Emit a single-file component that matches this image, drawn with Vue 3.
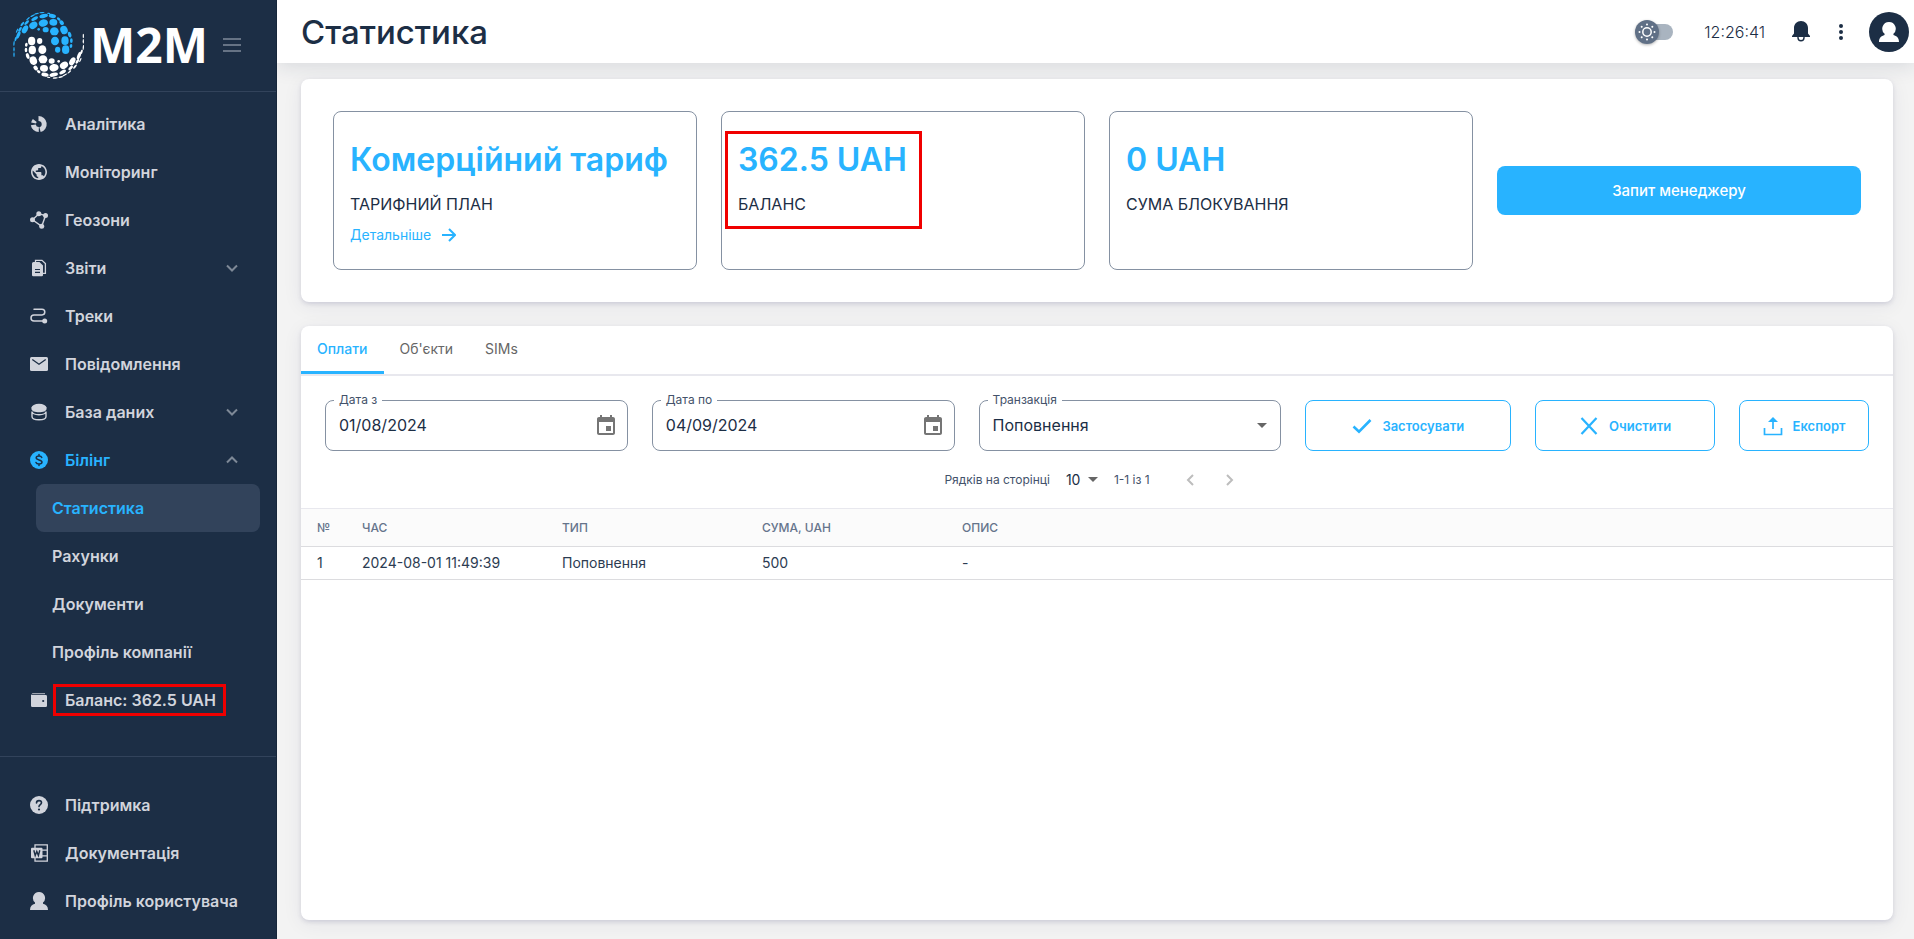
<script setup>
import { ref } from 'vue'

const dots = [
  [42, 164, 2, 7, 0], [42, 148, 2, 7, 0], [42, 130, 2, 8, 5], [47, 117, 3, 7, 15], [55, 105, 5, 12, 22],
  [51, 92, 2, 7, 25], [60, 88, 4, 8, 32], [75, 88, 8, 13, 30], [67, 72, 3, 8, 40], [80, 68, 4, 9, 45],
  [100, 76, 13, 10, -35], [130, 69, 14, 11, -12], [160, 67, 12, 10, 5], [185, 68, 8, 6, 50],
  [84, 56, 2, 7, 50], [104, 56, 11, 5, -30], [131, 48, 13, 6, -12], [157, 48, 11, 6, 12], [176, 57, 6, 4, 35],
  [98, 47, 8, 2, -28], [110, 41, 7, 2, -15], [126, 38, 8, 2, -3], [146, 40, 5, 2, 5],
  [116, 88, 4, 4, 0], [137, 89, 9, 8, 0], [163, 94, 13, 12, 0], [192, 90, 11, 13, -20], [209, 104, 5, 9, -20],
  [165, 123, 12, 13, 0], [195, 122, 11, 13, 0], [214, 122, 4, 7, 0], [173, 149, 8, 9, 0], [197, 149, 11, 13, 0],
  [213, 138, 4, 6, 10],
]

const nav = [
  { icon: 'pie', label: 'Аналітика' },
  { icon: 'globe', label: 'Моніторинг' },
  { icon: 'geo', label: 'Геозони' },
  { icon: 'docs', label: 'Звіти', fold: true },
  { icon: 'track', label: 'Треки' },
  { icon: 'mail', label: 'Повідомлення' },
  { icon: 'db', label: 'База даних', fold: true },
  {
    icon: 'billing', label: 'Білінг', fold: true, open: true,
    items: ['Статистика', 'Рахунки', 'Документи', 'Профіль компанії'],
  },
  { icon: 'wallet', label: 'Баланс: 362.5 UAH', marked: true },
]
const support = [
  { icon: 'help', label: 'Підтримка' },
  { icon: 'word', label: 'Документація' },
  { icon: 'user', label: 'Профіль користувача' },
]
const icons = {
  pie: '<g fill="none" stroke="currentColor" stroke-width="5"><path d="M8.500 3.400A5.700 5.700 0 0 1 10 14.600"/><path d="M8.800 14.600A5.700 5.700 0 0 1 3.300 9.800"/><path d="M3.600 8A5.700 5.700 0 0 1 4.800 5.500"/></g>',
  globe: '<path fill="currentColor" transform="translate(-.6 -.6) scale(.8)" d="M12 2C6.480 2 2 6.480 2 12s4.480 10 10 10 10-4.480 10-10S17.520 2 12 2zm-1 17.930c-3.950-.490-7-3.850-7-7.930 0-.620.080-1.210.210-1.790L9 15v1c0 1.100.9 2 2 2v1.930zm6.900-2.540c-.260-.810-1-1.390-1.900-1.390h-1v-3c0-.550-.450-1-1-1H8v-2h2c.550 0 1-.450 1-1V7h2c1.100 0 2-.9 2-2v-.410c2.930 1.190 5 4.060 5 7.410 0 2.080-.8 3.970-2.100 5.390z"/>',
  geo: '<path fill="none" stroke="currentColor" stroke-width="1.400" d="M2.500 8.700 9 2.800 15.500 4.600 11.700 15.400z"/><g fill="currentColor"><circle cx="2.500" cy="8.700" r="2.500"/><circle cx="8.800" cy="2.700" r="2.500"/><circle cx="15.500" cy="4.600" r="2.500"/><circle cx="11.700" cy="15.300" r="2.500"/></g>',
  docs: '<path fill="none" stroke="currentColor" stroke-width="1.300" d="M5.500 3V1.300H12L15.400 4.500V14.300H13"/><path fill="currentColor" d="M3.500 3h6L13 6.500V16a1.200 1.200 0 0 1-1.200 1.200H3.200A1.200 1.200 0 0 1 2 16V4.500A1.500 1.500 0 0 1 3.500 3z"/><path stroke="#1c2e45" stroke-width="1.200" d="M5 10.500h5M5 13.300h5"/>',
  track: '<path fill="none" stroke="currentColor" stroke-width="1.500" stroke-linecap="round" d="M4 2.300h8a2.800 2.800 0 0 1 0 5.600H4a3 3 0 0 0 0 6h9"/><circle cx="14.700" cy="14" r="2.500" fill="currentColor"/>',
  mail: '<rect y="2" width="18" height="14" rx="1.500" fill="currentColor"/><path fill="none" stroke="#1c2e45" stroke-width="1.300" d="M2.300 4.500 9 9.200l6.700-4.700"/>',
  db: '<g fill="currentColor"><ellipse cx="9" cy="4.500" rx="7.500" ry="3.700"/><path d="M1.500 4.500h15V6c0 2-3.400 3.300-7.500 3.300S1.500 8 1.500 6z"/></g><path fill="none" stroke="currentColor" stroke-width="1.400" d="M2 8.500c.3 1.900 3.300 3.200 7 3.200s6.700-1.300 7-3.200M2 8.500v5c0 1.900 3.100 3.300 7 3.300s7-1.400 7-3.300v-5"/>',
  billing: '<circle cx="9" cy="9" r="9" fill="currentColor"/><path fill="none" stroke="#1c2e45" stroke-width="1.500" stroke-linecap="round" d="M11.800 6.400C11.400 5.300 10.300 4.900 9 4.900c-1.700 0-2.800.7-2.800 1.900C6.200 9.600 12 8.200 12 11.100c0 1.200-1.200 2-3 2-1.500 0-2.600-.5-3-1.600M9 3.500v1.400M9 13.100v1.400"/>',
  wallet: '<path fill="currentColor" opacity=".7" d="M2.500 2H15v1.200H1.500z"/><path fill="currentColor" d="M1 3.500l1 .6h13.700A1.300 1.300 0 0 1 17 5.400v9.300a1.300 1.300 0 0 1-1.300 1.300H2.300A1.300 1.300 0 0 1 1 14.700z"/><circle cx="13.200" cy="10" r="1.100" fill="#1c2e45"/>',
  help: '<circle cx="9" cy="9" r="9" fill="currentColor"/><path fill="none" stroke="#1c2e45" stroke-width="1.600" stroke-linecap="round" d="M6.500 7c0-1.500 1.100-2.400 2.500-2.400s2.500.9 2.500 2.200C11.500 8.600 9 8.700 9 10.600"/><circle cx="9" cy="13.500" r="1.100" fill="#1c2e45"/>',
  word: '<path fill="none" stroke="currentColor" stroke-width="1.300" d="M5 4V.8h12.300v16.400H5V14M12 6.200h5M12 11.800h5"/><rect x="1" y="3.700" width="11.500" height="10.600" rx="1" fill="currentColor"/><path fill="none" stroke="#1c2e45" stroke-width="1.400" d="M3.800 6.300 5.200 11.500 6.800 7.500 8.400 11.500 9.800 6.300"/>',
  user: '<path fill="currentColor" d="M9 0a6 6 0 0 1 4 10.500v1.300c3 .8 5 2.700 5 6.200H0c0-3.500 2-5.400 5-6.200v-1.300A6 6 0 0 1 9 0z"/>',
}

const tabs = ['Оплати', "Об'єкти", 'SIMs']
const dateFrom = ref('01/08/2024')
const dateTo = ref('04/09/2024')
const kind = ref('Поповнення')
const perPage = ref('10')
const rows = [{ n: 1, time: '2024-08-01 11:49:39', type: 'Поповнення', sum: 500, note: '-' }]
</script>

<template>
  <div class="app">
    <aside class="side">
      <div class="brand">
        <svg class="globe" viewBox="36 30 222 210" aria-hidden="true">
          <g fill="#28b3ff">
            <ellipse v-for="(d, i) in dots" :key="i" :cx="d[0]" :cy="d[1]" :rx="d[2]" :ry="d[3]" :transform="`rotate(${d[4]} ${d[0]} ${d[1]})`" />
          </g>
          <g fill="#fff" transform="rotate(180 146 136)">
            <ellipse v-for="(d, i) in dots" :key="i" :cx="d[0]" :cy="d[1]" :rx="d[2]" :ry="d[3]" :transform="`rotate(${d[4]} ${d[0]} ${d[1]})`" />
          </g>
        </svg>
        <span class="name">M2M</span>
        <button class="burger" type="button" aria-label="Меню"><i></i><i></i><i></i></button>
      </div>
      <nav class="nav">
        <template v-for="n in nav" :key="n.label">
          <a href="#" class="item" :class="{ active: n.open }">
            <svg class="ico" viewBox="0 0 18 18" aria-hidden="true" v-html="icons[n.icon]"></svg>
            <span class="text" :class="{ marked: n.marked }">{{ n.label }}</span>
            <svg v-if="n.fold" class="fold" viewBox="0 0 12 8" aria-hidden="true">
              <path :d="n.open ? 'M1 6.500 6 1.500 11 6.500' : 'M1 1.500 6 6.500 11 1.500'" />
            </svg>
          </a>
          <a v-for="(s, i) in n.items || []" :key="s" href="#" class="sub" :class="{ current: i === 0 }">{{ s }}</a>
        </template>
      </nav>
      <nav class="nav support">
        <a v-for="n in support" :key="n.label" href="#" class="item">
          <svg class="ico" viewBox="0 0 18 18" aria-hidden="true" v-html="icons[n.icon]"></svg>
          <span class="text">{{ n.label }}</span>
        </a>
      </nav>
    </aside>

    <div class="page">
      <header class="top">
        <h1>Статистика</h1>
        <button class="theme" type="button" aria-label="Тема">
          <span class="thumb">
            <svg viewBox="0 0 24 24" aria-hidden="true">
              <circle cx="12" cy="12" r="4.200" fill="none" stroke="#fff" stroke-width="1.500" />
              <g fill="#fff">
                <circle v-for="a in 8" :key="a" cx="12" cy="4.500" r="1" :transform="`rotate(${a * 45} 12 12)`" />
              </g>
            </svg>
          </span>
        </button>
        <time class="clock">12:26:41</time>
        <button class="bell" type="button" aria-label="Сповіщення">
          <svg viewBox="0 0 18 21" aria-hidden="true">
            <path fill="#1c2e45" d="M9 0c4 0 7 3 7 7v5.500L18 15v1H0v-1l2-2.500V7c0-4 3-7 7-7z" />
            <path fill="none" stroke="#1c2e45" stroke-width="1.400" d="M6 16v.8a3 3 0 0 0 6 0V16" />
          </svg>
        </button>
        <button class="more" type="button" aria-label="Більше"><i></i><i></i><i></i></button>
        <button class="avatar" type="button" aria-label="Профіль">
          <svg viewBox="0 0 18 18" aria-hidden="true" v-html="icons.user"></svg>
        </button>
      </header>

      <main class="main">
        <section class="card summary">
          <div class="stat">
            <h2>Комерційний тариф</h2>
            <p>ТАРИФНИЙ ПЛАН</p>
            <a href="#">Детальніше
              <svg viewBox="0 0 14 14" aria-hidden="true"><path d="M0 7h13M7 1l6 6-6 6" /></svg>
            </a>
          </div>
          <div class="stat boxed">
            <h2>362.5 UAH</h2>
            <p>БАЛАНС</p>
          </div>
          <div class="stat">
            <h2>0 UAH</h2>
            <p>СУМА БЛОКУВАННЯ</p>
          </div>
          <button class="primary" type="button">Запит менеджеру</button>
        </section>

        <section class="card list">
          <div class="tabs" role="tablist">
            <button v-for="(t, i) in tabs" :key="t" type="button" role="tab" :aria-selected="i === 0" :class="{ on: i === 0 }">{{ t }}</button>
          </div>
          <form class="filters" @submit.prevent>
            <div class="field">
              <label for="from">Дата з</label>
              <input id="from" v-model="dateFrom" type="text" />
              <button type="button" class="cal" aria-label="Вибрати дату початку">
                <svg viewBox="0 0 24 24" aria-hidden="true"><path d="M17 12h-5v5h5v-5zM16 1v2H8V1H6v2H5c-1.110 0-1.990.9-1.990 2L3 19c0 1.100.890 2 2 2h14c1.100 0 2-.9 2-2V5c0-1.100-.9-2-2-2h-1V1h-2zm3 18H5V8h14v11z" /></svg>
              </button>
            </div>
            <div class="field">
              <label for="to">Дата по</label>
              <input id="to" v-model="dateTo" type="text" />
              <button type="button" class="cal" aria-label="Вибрати дату кінця">
                <svg viewBox="0 0 24 24" aria-hidden="true"><path d="M17 12h-5v5h5v-5zM16 1v2H8V1H6v2H5c-1.110 0-1.990.9-1.990 2L3 19c0 1.100.890 2 2 2h14c1.100 0 2-.9 2-2V5c0-1.100-.9-2-2-2h-1V1h-2zm3 18H5V8h14v11z" /></svg>
              </button>
            </div>
            <div class="field">
              <label for="kind">Транзакція</label>
              <select id="kind" v-model="kind"><option>Поповнення</option></select>
              <svg class="caret" viewBox="0 0 10 5" aria-hidden="true"><path d="M0 0h10L5 5z" /></svg>
            </div>
            <button class="outline" type="submit">
              <svg viewBox="0 0 20 20" aria-hidden="true"><path stroke-width="2.600" d="M1.500 10.500 7 15.700 18.500 4" /></svg>
              Застосувати
            </button>
            <button class="outline" type="reset">
              <svg viewBox="0 0 20 20" aria-hidden="true"><path stroke-width="2.200" d="M2.500 2l15 16M17.500 2l-15 16" /></svg>
              Очистити
            </button>
            <button class="outline" type="button">
              <svg viewBox="0 0 20 20" aria-hidden="true"><path stroke-width="1.700" d="M1.500 12v6.500h17V12M10 4v9" /><path fill="#28b3ff" stroke="none" d="M10 1l5 5H5z" /></svg>
              Експорт
            </button>
          </form>
          <div class="pager">
            <label for="per">Рядків на сторінці</label>
            <span class="per">
              <select id="per" v-model="perPage"><option>10</option></select>
              <svg class="caret" viewBox="0 0 10 5" aria-hidden="true"><path d="M0 0h10L5 5z" /></svg>
            </span>
            <span class="range">1-1 із 1</span>
            <button type="button" disabled aria-label="Попередня"><svg viewBox="0 0 8 12" aria-hidden="true"><path d="M7 1 2 6l5 5" /></svg></button>
            <button type="button" disabled aria-label="Наступна"><svg viewBox="0 0 8 12" aria-hidden="true"><path d="M1 1l5 5-5 5" /></svg></button>
          </div>
          <table>
            <colgroup><col class="c-num" /><col class="c" /><col class="c" /><col class="c" /><col /></colgroup>
            <thead>
              <tr><th>№</th><th>ЧАС</th><th>ТИП</th><th>СУМА, UAH</th><th>ОПИС</th></tr>
            </thead>
            <tbody>
              <tr v-for="r in rows" :key="r.n">
                <td>{{ r.n }}</td><td>{{ r.time }}</td><td>{{ r.type }}</td><td>{{ r.sum }}</td><td>{{ r.note }}</td>
              </tr>
            </tbody>
          </table>
        </section>
      </main>
    </div>
  </div>
</template>

<style>
body { margin: 0; background: #f3f3f3; }
</style>

<style scoped>
.app { display: flex; min-height: 100vh; font-family: Inter, "Liberation Sans", sans-serif; color: #1c2e45; font-size: 16px; }
.app *, .app *::before, .app *::after { box-sizing: border-box; }
button { border: 0; padding: 0; background: none; font: inherit; color: inherit; cursor: pointer; }
a { text-decoration: none; color: inherit; }
svg { display: block; flex: none; }

.side { position: relative; z-index: 1; width: 277px; flex: none; background: #1c2e45; border-right: 1px solid #16263a; color: #d1d4dc; }
.brand { display: flex; align-items: center; height: 92px; padding: 0 12px 2px; border-bottom: 1px solid #32435b; }
.globe { width: 74px; height: 70px; }
.name { flex: none; width: 120px; padding-left: 4px; font: 700 48px/72px "Open Sans", "Noto Sans", sans-serif; color: #fff; }
.burger { display: flex; flex-direction: column; gap: 4px; width: 18px; margin-left: 17px; }
.burger i { height: 2px; background: #667385; }
.nav { padding: 8px 16px 0 0; }
.item { display: flex; align-items: center; height: 48px; padding-left: 30px; font-weight: 600; }
.ico { width: 18px; height: 18px; margin-right: 17px; }
.text { flex: 1; white-space: nowrap; }
.active, .current { color: #28b3ff; }
.fold { width: 12px; height: 8px; margin-right: 22px; fill: none; stroke: #7e8997; stroke-width: 2; }
.sub { display: flex; align-items: center; height: 48px; margin-left: 36px; padding-left: 16px; border-radius: 8px; font-weight: 600; }
.current { background: #32435b; }
.marked { position: relative; }
.marked::after { content: ""; position: absolute; left: -12px; top: -6px; width: 173px; height: 32px; border: 3px solid #f00000; }
.support { margin-top: 32px; padding: 24px 0 0; border-top: 1px solid #32435b; }

.page { flex: 1; min-width: 0; display: flex; flex-direction: column; }
.top { display: flex; align-items: center; height: 63px; padding: 0 5px 0 24px; background: #fff; box-shadow: 0 2px 20px rgba(30, 40, 70, .14); }
h1 { flex: 1; margin: 0; font-size: 33px; line-height: 40px; font-weight: 500; }
.theme { width: 28px; height: 16px; margin-right: 31px; border-radius: 8px; background: #a9b4c0; display: flex; align-items: center; }
.thumb { flex: none; width: 24px; height: 24px; margin-left: -10px; border-radius: 50%; background: #607086; box-shadow: 0 1px 3px rgba(0, 0, 0, .3); }
.clock { font-weight: 300; }
.bell { margin-left: 27px; }
.bell svg { width: 18px; height: 21px; }
.more { display: flex; flex-direction: column; align-items: center; gap: 2px; width: 16px; margin: 0 20px 0 23px; }
.more i { width: 4px; height: 4px; border-radius: 50%; background: #1c2e45; }
.avatar { width: 40px; height: 40px; border-radius: 50%; background: #1c2e45; color: #fff; display: flex; align-items: center; justify-content: center; }
.avatar svg { width: 20px; height: 20px; }

.main { flex: 1; display: flex; flex-direction: column; gap: 24px; padding: 16px 21px 19px 24px; }
.card { background: #fff; border-radius: 8px; box-shadow: 0 2px 4px rgba(60, 60, 120, .16), 0 4px 20px rgba(40, 45, 80, .07); }
.summary { display: grid; grid-template-columns: repeat(4, 1fr); gap: 24px; padding: 32px; align-items: center; }
.stat { align-self: stretch; min-height: 159px; padding: 24px 16px; border: 1px solid #8591a2; border-radius: 8px; position: relative; }
.stat h2 { margin: 0; font-size: 32px; line-height: 48px; font-weight: 600; color: #28b3ff; white-space: nowrap; }
.stat p { margin: 8px 0; font-size: 16px; line-height: 24px; }
.stat a { display: flex; align-items: center; gap: 11px; font-size: 14px; line-height: 21px; color: #28b3ff; }
.stat a svg { width: 14px; height: 14px; fill: none; stroke: currentColor; stroke-width: 2; }
.boxed::after { content: ""; position: absolute; left: 3px; top: 19px; width: 197px; height: 98px; border: 3px solid #f00000; }
.primary { height: 49px; border-radius: 8px; background: #28b3ff; color: #fff; font-size: 15px; font-weight: 500; }

.list { flex: 1; overflow: hidden; }
.tabs { display: flex; height: 50px; border-bottom: 2px solid #e8e8ee; }
.tabs button { padding: 0 16px; border-bottom: 3px solid transparent; font-size: 14px; color: #666; }
.tabs .on { color: #28b3ff; border-bottom-color: #28b3ff; font-weight: 500; }
.filters { display: grid; grid-template-columns: 303fr 303fr 303fr 206fr 180fr 130fr; gap: 24px; padding: 24px 24px 0; }
.field { position: relative; display: flex; align-items: center; height: 51px; padding: 0 13px; border: 1px solid #8591a2; border-radius: 8px; }
.field label { position: absolute; left: 8px; top: -9px; padding: 0 5px; background: #fff; font-size: 12px; line-height: 16px; color: #43526a; }
.field input, .field select { flex: 1; min-width: 0; width: 100%; height: 100%; padding: 0 0 2px; border: 0; outline: 0; background: none; appearance: none; font: inherit; color: inherit; }
.cal svg { width: 24px; height: 24px; fill: #757575; margin-right: -4px; }
.caret { width: 10px; height: 5px; fill: #666; pointer-events: none; }
.outline { display: flex; align-items: center; justify-content: center; gap: 10px; border: 1px solid #28b3ff; border-radius: 8px; color: #28b3ff; font-size: 13px; font-weight: 600; }
.outline svg { width: 20px; height: 20px; fill: none; stroke: currentColor; }
.pager { display: flex; align-items: center; justify-content: center; height: 57px; font-size: 12px; color: #43526a; }
.per { display: flex; align-items: center; margin: 0 16px; }
.per select { appearance: none; width: 22px; padding: 0; border: 0; background: none; font-family: inherit; font-size: 14px; color: #1c2e45; }
.range { margin-right: 20px; }
.pager button { width: 40px; height: 40px; display: flex; align-items: center; justify-content: center; }
.pager button svg { width: 8px; height: 12px; fill: none; stroke: #bdbdbd; stroke-width: 2; }
table { width: 100%; table-layout: fixed; border-collapse: separate; border-spacing: 0; }
.c-num { width: 45px; }
.c { width: 200px; }
th, td { padding: 0 0 0 16px; text-align: left; border-bottom: 1px solid #dcdcdf; white-space: nowrap; }
th { height: 39px; border-top: 1px solid #e8e8ee; background: #fbfbfb; font-size: 12px; font-weight: 500; color: #65748b; }
td { height: 33px; padding-bottom: 1px; font-size: 14px; color: #2c3c52; }
</style>
